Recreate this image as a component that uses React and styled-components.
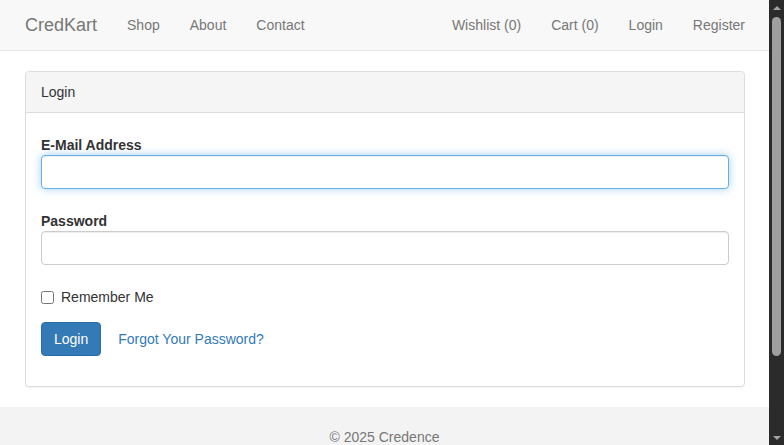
import React from 'react';
import styled, { createGlobalStyle } from 'styled-components';

const GlobalStyle = createGlobalStyle`
  body {
    margin: 0;
    background: #fff;
    font-family: "Liberation Sans", Arial, sans-serif;
    font-size: 14px;
    line-height: 1.42857;
    color: #333;
  }
  * {
    box-sizing: border-box;
  }
`;

const Shell = styled.div`
  display: flex;
  height: 100vh;
  overflow: hidden;
`;

const Page = styled.div`
  flex: 1;
  min-width: 0;
  overflow: hidden;
`;

const Rail = styled.div`
  width: 15px;
  flex-shrink: 0;
  display: flex;
  flex-direction: column;
  align-items: center;
  background: #2b2b2b;
`;

const Arrow = styled.div`
  height: 15px;
  display: flex;
  align-items: center;
  justify-content: center;
  &::before {
    content: '';
    border-left: 4px solid transparent;
    border-right: 4px solid transparent;
    ${(p) =>
      p.$down
        ? 'border-top: 4px solid #a3a3a3;'
        : 'border-bottom: 4px solid #a3a3a3;'}
  }
`;

const Track = styled.div`
  flex: 1;
  width: 100%;
  padding: 2px 3px;
`;

const Thumb = styled.div`
  height: 339px;
  background: #9f9f9f;
  border-radius: 5px;
`;

const Navbar = styled.nav`
  display: flex;
  align-items: center;
  justify-content: space-between;
  height: 51px;
  padding: 0 9px 0 10px;
  background: #f8f8f8;
  border-bottom: 1px solid #e7e7e7;
  margin-bottom: 20px;
`;

const NavGroup = styled.div`
  display: flex;
  align-items: center;
`;

const Brand = styled.a`
  padding: 15px;
  font-size: 18px;
  line-height: 20px;
  color: #777;
  text-decoration: none;
`;

const NavLink = styled.a`
  padding: 15px;
  line-height: 20px;
  color: #777;
  text-decoration: none;
`;

const Container = styled.div`
  padding: 0 24px 0 25px;
`;

const Panel = styled.section`
  border: 1px solid #ddd;
  border-radius: 4px;
  background: #fff;
  box-shadow: 0 1px 1px rgba(0, 0, 0, 0.05);
  margin-bottom: 20px;
`;

const PanelHeading = styled.div`
  padding: 11px 15px 9px;
  background: #f5f5f5;
  border-bottom: 1px solid #ddd;
  border-radius: 3px 3px 0 0;
  color: #333;
`;

const PanelBody = styled.div`
  padding: 15px;
`;

const FormGroup = styled.div`
  margin-bottom: 15px;
`;

const Label = styled.label`
  display: block;
  padding-top: 8px;
  margin-bottom: -1px;
  font-weight: bold;
`;

const Input = styled.input`
  display: block;
  width: 100%;
  height: 34px;
  padding: 6px 12px;
  font: inherit;
  color: #555;
  background: #fff;
  border: 1px solid #ccc;
  border-radius: 4px;
  box-shadow: inset 0 1px 1px rgba(0, 0, 0, 0.075);
  outline: none;
  &:focus {
    border-color: #66afe9;
    box-shadow: inset 0 1px 1px rgba(0, 0, 0, 0.075),
      0 0 8px rgba(102, 175, 233, 0.6);
  }
`;

const CheckRow = styled.label`
  display: flex;
  align-items: center;
  height: 27px;
  padding-top: 9px;
  input {
    width: 13px;
    height: 13px;
    margin: 0 7px 0 0;
  }
`;

const Actions = styled.div`
  display: flex;
  align-items: center;
  gap: 17px;
`;

const Button = styled.button`
  height: 34px;
  padding: 7px 12px 5px;
  font: inherit;
  color: #fff;
  background: #337ab7;
  border: 1px solid #2e6da4;
  border-radius: 4px;
`;

const TextLink = styled.a`
  padding-top: 2px;
  color: #337ab7;
  text-decoration: none;
`;

const Footer = styled.footer`
  background: #f3f3f3;
  padding: 21px 0 20px;
  text-align: center;
  color: #777;
`;

export default function App() {
  return (
    <>
      <GlobalStyle />
      <Shell>
        <Page>
          <Navbar>
            <NavGroup>
              <Brand href="#">CredKart</Brand>
              <NavLink href="#">Shop</NavLink>
              <NavLink href="#">About</NavLink>
              <NavLink href="#">Contact</NavLink>
            </NavGroup>
            <NavGroup>
              <NavLink href="#">Wishlist (0)</NavLink>
              <NavLink href="#">Cart (0)</NavLink>
              <NavLink href="#">Login</NavLink>
              <NavLink href="#">Register</NavLink>
            </NavGroup>
          </Navbar>
          <Container>
            <Panel>
              <PanelHeading>Login</PanelHeading>
              <PanelBody>
                <FormGroup>
                  <Label htmlFor="email">E-Mail Address</Label>
                  <Input id="email" type="email" autoFocus />
                </FormGroup>
                <FormGroup>
                  <Label htmlFor="password">Password</Label>
                  <Input id="password" type="password" />
                </FormGroup>
                <FormGroup>
                  <CheckRow>
                    <input type="checkbox" />
                    Remember Me
                  </CheckRow>
                </FormGroup>
                <FormGroup>
                  <Actions>
                    <Button type="button">Login</Button>
                    <TextLink href="#">Forgot Your Password?</TextLink>
                  </Actions>
                </FormGroup>
              </PanelBody>
            </Panel>
          </Container>
          <Footer>© 2025 Credence</Footer>
        </Page>
        <Rail>
          <Arrow />
          <Track>
            <Thumb />
          </Track>
          <Arrow $down />
        </Rail>
      </Shell>
    </>
  );
}
